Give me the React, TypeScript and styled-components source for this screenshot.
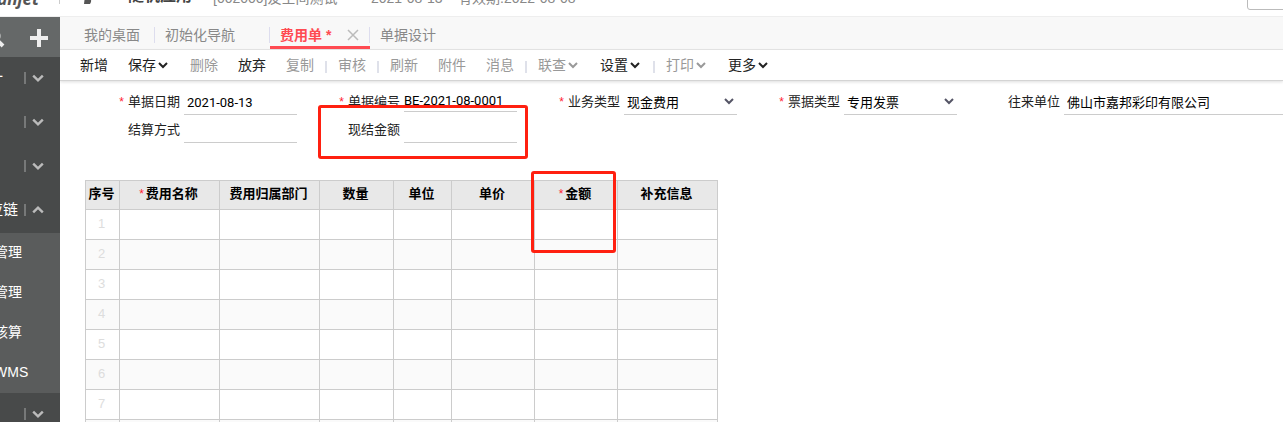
import React from 'react';
import styled, { createGlobalStyle, css } from 'styled-components';

const GlobalStyle = createGlobalStyle`
  *, *::before, *::after { box-sizing: border-box; }
  body {
    margin: 0;
    overflow: hidden;
    background: #fff;
    color: #222;
    font: 14px/20px "Liberation Sans", "Noto Sans CJK SC", sans-serif;
  }
  button, input, select { font: inherit; color: inherit; }
  button { padding: 0; border: 0; background: none; cursor: pointer; }
`;

const Page = styled.div`
  display: flex;
  flex-direction: column;
  height: 100vh;
  overflow: hidden;
`;

const Header = styled.header`
  display: flex;
  align-items: flex-end;
  flex: none;
  height: 17px;
  padding-bottom: 6px;
  overflow: hidden;
  border-bottom: 1px solid #eee;
  color: #888;
`;

const Brand = styled.div`
  display: flex;
  justify-content: flex-end;
  flex: none;
  width: 60px;
  padding-right: 21px;
  font: italic bold 17px/22px "Open Sans", sans-serif;
  color: #555;
`;

const BrandRule = styled.span`
  flex: none;
  width: 1px;
  height: 20px;
  margin: 0 24px 6px -1px;
  background: #ccc;
`;

const BrandMark = styled.svg`
  flex: none;
  width: 10px;
  height: 16px;
  margin-right: 34px;
  margin-bottom: 6px;
`;

const Company = styled.strong`
  flex: none;
  width: 85px;
  line-height: 28px;
  font-size: 16px;
  color: #444;
  white-space: nowrap;
`;

const HeaderText = styled.span<{ $width?: number }>`
  flex: none;
  width: ${p => (p.$width ? `${p.$width}px` : 'auto')};
  line-height: 24px;
  white-space: nowrap;
`;

const HeaderSearch = styled.div`
  display: flex;
  flex: none;
  width: 36px;
  margin-left: auto;

  input {
    flex: none;
    width: 60px;
    height: 24px;
    border: 1px solid #bbb;
    border-radius: 3px;
  }
`;

const Body = styled.div`
  display: flex;
  flex: 1;
  min-height: 0;
`;

const Sidebar = styled.nav`
  display: flex;
  justify-content: flex-end;
  flex: none;
  position: relative;
  z-index: 1;
  width: 60px;
  overflow: hidden;
  background: #484a4a;
  color: #fff;
`;

const SidebarInner = styled.div`
  flex: none;
  width: 120px;
`;

const QuickBar = styled.div`
  display: flex;
  align-items: center;
  justify-content: flex-end;
  gap: 24px;
  height: 40px;
  padding: 2px 11px 0 0;
  background: #656868;

  button { display: flex; }
`;

const MenuRow = styled.button`
  display: flex;
  align-items: center;
  width: 100%;
  height: 44px;
  padding: 0 16px 2px 33px;
  font-size: 15px;
  text-align: left;

  span { flex: 1; }
`;

const MenuRule = styled.i`
  width: 2px;
  height: 12px;
  margin-right: 6px;
  background: #777979;
`;

const SubMenu = styled.div`
  background: #5a5c5c;
`;

const SubLink = styled.a`
  display: block;
  height: 40px;
  padding-left: 26px;
  line-height: 38px;
  color: #fff;
  text-decoration: none;
  white-space: nowrap;
`;

const Main = styled.main`
  flex: 1;
  min-width: 0;
`;

const Tabs = styled.div`
  display: flex;
  align-items: stretch;
  height: 33px;
  border-bottom: 1px solid #e4e4e4;
  background: #f8f8f8;
`;

const Tab = styled.div<{ $active?: boolean; $width: number }>`
  display: flex;
  align-items: center;
  justify-content: space-between;
  width: ${p => p.$width}px;
  padding: 3px 10px 0;
  position: relative;
  color: #888;

  &::after {
    content: '';
    position: absolute;
    right: 0;
    top: 10px;
    width: 1px;
    height: 16px;
    background: #dde;
  }

  &:last-child::after { display: none; }
  &:first-child { padding-left: 24px; }

  ${p => p.$active && css`
    color: #ff4b52;
    font-weight: bold;
    border-bottom: 3px solid #ff4b52;
    padding-top: 6px;
  `}

  button { display: flex; }
`;

const Toolbar = styled.div`
  display: flex;
  align-items: center;
  gap: 20px;
  height: 31px;
  padding: 0 20px;
  border-bottom: 1px solid #d4d4d4;
  box-shadow: 0 1px 3px #ddd;
`;

const Tool = styled.button<{ $disabled?: boolean }>`
  display: flex;
  align-items: center;
  gap: 2px;
  color: ${p => (p.$disabled ? '#999' : '#222')};

  svg { margin-right: 2px; }
`;

const ToolRule = styled.i`
  width: 2px;
  height: 12px;
  margin: 3px -9px 0;
  background: #dfe1ea;
`;

const Form = styled.form`
  display: grid;
  grid-template-columns: repeat(4, 220px) 1fr;
  padding: 6px 0 0 20px;
  font-size: 13px;
`;

const FieldBox = styled.div`
  display: flex;
  align-items: flex-end;
  position: relative;
  height: 28px;
`;

const FieldLabel = styled.label`
  flex: none;
  width: 100px;
  line-height: 26px;
  text-align: right;
  white-space: nowrap;
`;

const Star = styled.span`
  margin-right: 4px;
  font-size: 12px;
  font-weight: normal;
  color: #f23;
`;

const Control = styled.div<{ $raised?: boolean; $wide?: boolean }>`
  display: flex;
  align-items: center;
  flex: ${p => (p.$wide ? '1' : '0 0 113px')};
  height: ${p => (p.$raised ? 21 : 24)}px;
  margin-left: 4px;
  margin-bottom: ${p => (p.$raised ? 3 : 0)}px;
  padding-right: ${p => (p.$wide ? 0 : 3)}px;
  border-bottom: 1px solid #ccc;

  input, select {
    flex: 1;
    min-width: 0;
    width: 100%;
    height: 20px;
    padding: 0 0 0 ${p => (p.$raised ? 0 : 3)}px;
    border: 0;
    outline: 0;
    appearance: none;
    background: transparent;
    font-family: Roboto, "Noto Sans CJK SC", sans-serif;
    color: #000;
  }

  svg { flex: none; margin-bottom: 4px; }
`;

const Highlight = styled.span<{ $x: number; $y: number; $w: number; $h: number }>`
  position: absolute;
  left: ${p => p.$x}px;
  top: ${p => p.$y}px;
  width: ${p => p.$w}px;
  height: ${p => p.$h}px;
  border: 3px solid #ff2010;
  border-radius: 3px;
  pointer-events: none;
`;

const Table = styled.table`
  width: 633px;
  margin: 37px 0 0 25px;
  table-layout: fixed;
  border-collapse: collapse;
  font-size: 13px;

  th, td {
    height: 30px;
    padding: 0 2px 2px 0;
    border: 1px solid #ccc;
    text-align: center;
    white-space: nowrap;
  }
  th {
    position: relative;
    height: 29px;
    background: #e8e8e8;
    color: #000;
  }
  th > span:first-child { margin-right: 2px; }
  td { color: #ddd; }
  tbody tr:nth-child(even) { background: #fafafa; }
`;

type ChevronProps = { color: string; size?: number; up?: boolean; thick?: number };

function Chevron({ color, size = 10, up, thick = 2 }: ChevronProps) {
  return (
    <svg width={size} height={size} viewBox="0 0 10 10" fill="none" stroke={color} strokeWidth={thick}>
      <path d={up ? 'M1 7 5 3 9 7' : 'M1 3 5 7 9 3'} />
    </svg>
  );
}

type FieldProps = {
  id: string;
  label: string;
  value?: string;
  required?: boolean;
  select?: boolean;
  raised?: boolean;
  wide?: boolean;
  children?: React.ReactNode;
};

function Field({ id, label, value = '', required, select, raised, wide, children }: FieldProps) {
  return (
    <FieldBox>
      <FieldLabel htmlFor={id}>
        {required && <Star>*</Star>}
        {label}
      </FieldLabel>
      <Control $raised={raised} $wide={wide}>
        {select ? (
          <>
            <select id={id} defaultValue={value}>
              <option>{value}</option>
            </select>
            <Chevron color="#556" />
          </>
        ) : (
          <input id={id} type="text" defaultValue={value} />
        )}
      </Control>
      {children}
    </FieldBox>
  );
}

type ToolItem = { text: string; disabled?: boolean; menu?: boolean } | null;

const tools: ToolItem[] = [
  { text: '新增' },
  { text: '保存', menu: true },
  { text: '删除', disabled: true },
  { text: '放弃' },
  { text: '复制', disabled: true },
  null,
  { text: '审核', disabled: true },
  null,
  { text: '刷新', disabled: true },
  { text: '附件', disabled: true },
  { text: '消息', disabled: true },
  null,
  { text: '联查', disabled: true, menu: true },
  { text: '设置', menu: true },
  null,
  { text: '打印', disabled: true, menu: true },
  { text: '更多', menu: true },
];

const columns = [
  { title: '序号', width: 34 },
  { title: '费用名称', width: 100, required: true },
  { title: '费用归属部门', width: 100 },
  { title: '数量', width: 74 },
  { title: '单位', width: 58 },
  { title: '单价', width: 83 },
  { title: '金额', width: 83, required: true, marked: true },
  { title: '补充信息', width: 100 },
];

const rows = [1, 2, 3, 4, 5, 6, 7, 8];

function MenuItem({ text = '', open }: { text?: string; open?: boolean }) {
  return (
    <MenuRow type="button" aria-expanded={!!open} aria-label={text || '展开'}>
      <span>{text}</span>
      <MenuRule />
      <Chevron color="#bbb" size={12} up={open} />
    </MenuRow>
  );
}

export default function App() {
  return (
    <>
      <GlobalStyle />
      <Page>
        <Header>
          <Brand>Chanjet</Brand>
          <BrandRule />
          <BrandMark viewBox="0 0 10 16" fill="#555" aria-hidden="true">
            <path d="M2 0h6l-1 14-1 2H0z" />
          </BrandMark>
          <Company>随机应用</Company>
          <HeaderText $width={158}>[002000]友空间测试</HeaderText>
          <HeaderText $width={87}>2021-08-13</HeaderText>
          <HeaderText>有效期:2022-08-08</HeaderText>
          <HeaderSearch>
            <input type="text" aria-label="搜索" />
          </HeaderSearch>
        </Header>
        <Body>
          <Sidebar>
            <SidebarInner>
              <QuickBar>
                <button type="button" aria-label="搜索">
                  <svg width="20" height="20" viewBox="0 0 20 20" fill="none" stroke="#eee" strokeWidth="3">
                    <circle cx="8" cy="8" r="6" />
                    <path d="m12 12 6 6" strokeWidth="4" />
                  </svg>
                </button>
                <button type="button" aria-label="新增">
                  <svg width="20" height="20" viewBox="0 0 20 20" stroke="#eee" strokeWidth="4">
                    <path d="M10 1v18M1 10h18" />
                  </svg>
                </button>
              </QuickBar>
              <MenuItem text="会计" />
              <MenuItem />
              <MenuItem />
              <MenuItem text="供应链" open />
              <SubMenu>
                <SubLink href="#purchase">采购管理</SubLink>
                <SubLink href="#stock">库存管理</SubLink>
                <SubLink href="#costing">存货核算</SubLink>
                <SubLink href="#wms">智能WMS</SubLink>
              </SubMenu>
              <MenuItem />
            </SidebarInner>
          </Sidebar>
          <Main>
            <Tabs>
              <Tab $width={95}>我的桌面</Tab>
              <Tab $width={115}>初始化导航</Tab>
              <Tab $width={100} $active>
                <span>费用单 *</span>
                <button type="button" aria-label="关闭">
                  <svg width="14" height="14" viewBox="0 0 14 14" stroke="#bbb" strokeWidth="1.5">
                    <path d="m2 2 10 10M12 2 2 12" />
                  </svg>
                </button>
              </Tab>
              <Tab $width={78}>单据设计</Tab>
            </Tabs>
            <Toolbar>
              {tools.map((tool, i) =>
                tool ? (
                  <Tool key={tool.text} type="button" $disabled={tool.disabled}>
                    {tool.text}
                    {tool.menu && <Chevron color={tool.disabled ? '#999' : '#222'} />}
                  </Tool>
                ) : (
                  <ToolRule key={i} />
                ),
              )}
            </Toolbar>
            <Form>
              <Field id="date" label="单据日期" value="2021-08-13" required />
              <Field id="code" label="单据编号" value="BE-2021-08-0001" required raised />
              <Field id="business" label="业务类型" value="现金费用" required select />
              <Field id="invoice" label="票据类型" value="专用发票" required select />
              <Field id="partner" label="往来单位" value="佛山市嘉邦彩印有限公司" wide />
              <Field id="settle" label="结算方式" />
              <Field id="cash" label="现结金额">
                <Highlight $x={18} $y={-10} $w={210} $h={54} />
              </Field>
            </Form>
            <Table>
              <colgroup>
                {columns.map(c => (
                  <col key={c.title} width={c.width} />
                ))}
              </colgroup>
              <thead>
                <tr>
                  {columns.map(c => (
                    <th key={c.title} scope="col">
                      {c.required && <Star>*</Star>}
                      {c.title}
                      {c.marked && <Highlight $x={-4} $y={-10} $w={85} $h={82} />}
                    </th>
                  ))}
                </tr>
              </thead>
              <tbody>
                {rows.map(n => (
                  <tr key={n}>
                    {columns.map((c, i) => (
                      <td key={c.title}>{i === 0 ? n : null}</td>
                    ))}
                  </tr>
                ))}
              </tbody>
            </Table>
          </Main>
        </Body>
      </Page>
    </>
  );
}
